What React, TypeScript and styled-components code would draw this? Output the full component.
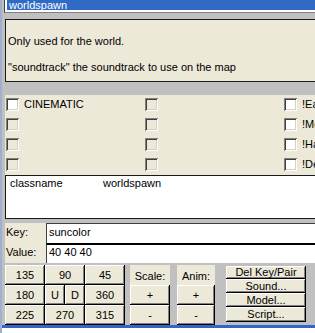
import React from 'react';
import styled, { createGlobalStyle } from 'styled-components';

const Global = createGlobalStyle`
  html, body { margin: 0; padding: 0; background: #c0c0c0; }
  body { font-family: "Liberation Sans", Arial, sans-serif; font-size: 11px; color: #000; }
  * { box-sizing: border-box; }
`;

const Window = styled.div`
  width: 315px;
  height: 333px;
  overflow: hidden;
  background: #c0c0c0;
  display: flex;
  flex-direction: column;
  border-left: 2px solid #9fb0cf;
`;

const Body = styled.div`
  width: 340px;
  display: flex;
  flex-direction: column;
  padding-left: 3px;
`;

const EntityList = styled.div`
  height: 13px;
  margin-left: -1px;
  background: #fff;
  border-left: 1px solid #404040;
  border-bottom: 1px solid #808080;
  padding-left: 2px;
  overflow: hidden;
`;

const SelectedItem = styled.div`
  height: 10px;
  background: #316ac5;
  color: #fff;
  line-height: 10px;
  padding-left: 2px;
`;

const Description = styled.div`
  margin-top: 6px;
  height: 63px;
  background: #ece9d8;
  border: 1px solid #1a1a1a;
  padding: 15px 0 0 2px;
  line-height: 13px;
`;

const Para = styled.p`
  margin: 0 0 13px 0;
`;

const FlagPanel = styled.div`
  margin-top: 13px;
  height: 80px;
  background: #ece9d8;
  display: grid;
  grid-template-columns: 139px 139px 139px;
  grid-template-rows: repeat(4, 20px);
  padding: 3px 0 0 1px;
  overflow: hidden;
`;

const Flag = styled.label`
  display: flex;
  align-items: flex-start;
  gap: 5px;
  line-height: 13px;
  white-space: nowrap;
`;

const Box = styled.span<{ $disabled?: boolean }>`
  width: 13px;
  height: 13px;
  flex: none;
  background: ${(p) => (p.$disabled ? '#ece9d8' : '#fff')};
  box-shadow: inset 1px 1px #808080, inset -1px -1px #fff, inset 2px 2px #404040,
    inset -2px -2px #d4d0c8;
`;

const PairList = styled.div`
  height: 44px;
  background: #fff;
  border: 1px solid #1a1a1a;
  padding: 1px 0 0 4px;
  display: grid;
  grid-template-columns: 93px auto;
  align-content: start;
  line-height: 13px;
`;

const FieldRow = styled.div<{ $first?: boolean }>`
  height: 20px;
  display: flex;
  margin-top: ${(p) => (p.$first ? '4px' : '0')};
`;

const FieldLabel = styled.div`
  width: 41px;
  background: #ece9d8;
  padding: 3px 0 0 1px;
  line-height: 13px;
`;

const FieldInput = styled.div<{ $first?: boolean }>`
  flex: 1;
  background: #fff;
  border-left: 1px solid #404040;
  border-top: ${(p) => (p.$first ? '1px solid #404040' : '2px solid #000')};
  padding: ${(p) => (p.$first ? '2px' : '1px')} 0 0 2px;
  line-height: 13px;
`;

const ButtonsArea = styled.div`
  margin-top: 2px;
  height: 60px;
  display: flex;
  align-items: flex-start;
`;

const AngleGrid = styled.div`
  display: grid;
  grid-template-columns: repeat(3, 40px);
  grid-template-rows: repeat(3, 20px);
`;

const Btn = styled.div`
  background: #ece9d8;
  display: flex;
  align-items: center;
  justify-content: center;
  line-height: 13px;
  box-shadow: inset -1px -1px #000, inset 1px 1px #fff, inset -2px -2px #808080;
  white-space: nowrap;
`;

const Split = styled.div`
  display: grid;
  grid-template-columns: 20px 20px;
`;

const SmallCol = styled.div<{ $w: number; $ml: number }>`
  width: ${(p) => p.$w}px;
  margin-left: ${(p) => p.$ml}px;
  display: grid;
  grid-template-rows: repeat(3, 20px);
`;

const ColLabel = styled.div`
  background: #ece9d8;
  display: flex;
  align-items: center;
  justify-content: center;
  padding-top: 1px;
`;

const ActionCol = styled.div`
  width: 80px;
  margin-left: 11px;
  margin-top: 1px;
  display: grid;
  grid-template-rows: 13px 14px 14px 15px;
`;

const Ruler = styled.div`
  height: 8px;
  border-top: 3px solid #3466c8;
  background: #fff;
`;

const flagsRows: [string, boolean, string, boolean, string, boolean][] = [
  ['CINEMATIC', false, '', true, '!Easy', false],
  ['', true, '', true, '!Medium', false],
  ['', true, '', true, '!Hard', false],
  ['', true, '', true, '!Deathmatch', false],
];

const ticks = [12, 30, 48, 66, 70, 88, 105, 122, 140, 158, 178, 197, 209, 213, 235, 255, 270, 291, 295, 306];

export default function App() {
  return (
    <>
      <Global />
      <Window>
        <Body>
          <EntityList>
            <SelectedItem>worldspawn</SelectedItem>
          </EntityList>
          <Description>
            <Para>Only used for the world.</Para>
            <Para>"soundtrack" the soundtrack to use on the map</Para>
          </Description>
          <FlagPanel>
            {flagsRows.flatMap((r, i) => [
              <Flag key={`a${i}`}>
                <Box $disabled={r[1]} />
                {r[0]}
              </Flag>,
              <Flag key={`b${i}`}>
                <Box $disabled={r[3]} />
                {r[2]}
              </Flag>,
              <Flag key={`c${i}`}>
                <Box $disabled={r[5]} />
                {r[4]}
              </Flag>,
            ])}
          </FlagPanel>
          <PairList>
            <span>classname</span>
            <span>worldspawn</span>
          </PairList>
          <FieldRow $first>
            <FieldLabel>Key:</FieldLabel>
            <FieldInput $first>suncolor</FieldInput>
          </FieldRow>
          <FieldRow>
            <FieldLabel>Value:</FieldLabel>
            <FieldInput>40 40 40</FieldInput>
          </FieldRow>
          <ButtonsArea>
            <AngleGrid>
              <Btn>135</Btn>
              <Btn>90</Btn>
              <Btn>45</Btn>
              <Btn>180</Btn>
              <Split>
                <Btn>U</Btn>
                <Btn>D</Btn>
              </Split>
              <Btn>360</Btn>
              <Btn>225</Btn>
              <Btn>270</Btn>
              <Btn>315</Btn>
            </AngleGrid>
            <SmallCol $w={40} $ml={5}>
              <ColLabel>Scale:</ColLabel>
              <Btn>+</Btn>
              <Btn>-</Btn>
            </SmallCol>
            <SmallCol $w={38} $ml={7}>
              <ColLabel>Anim:</ColLabel>
              <Btn>+</Btn>
              <Btn>-</Btn>
            </SmallCol>
            <ActionCol>
              <Btn>Del Key/Pair</Btn>
              <Btn>Sound...</Btn>
              <Btn>Model...</Btn>
              <Btn>Script...</Btn>
            </ActionCol>
          </ButtonsArea>
        </Body>
        <Ruler>
          <svg width="315" height="5" viewBox="0 0 315 5">
            {ticks.map((x) => (
              <line key={x} x1={x - 1.5} y1="0" x2={x - 1.5} y2="3" stroke="#333" strokeWidth="1" />
            ))}
          </svg>
        </Ruler>
      </Window>
    </>
  );
}
